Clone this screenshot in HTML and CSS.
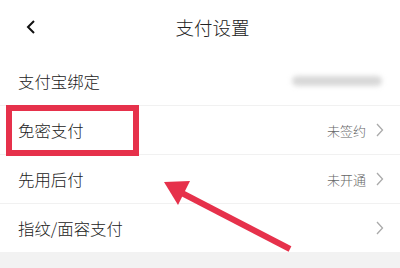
FILE: index.html
```html
<!DOCTYPE html>
<html lang="zh-CN">
<head>
  <meta charset="UTF-8">
  <title>支付设置</title>
  <meta name="viewport" content="width=device-width, initial-scale=1.0">
  <link rel="stylesheet" href="styles.css">
</head>
<body>
  <div class="page">
    <div class="header">
      <svg class="back" width="12" height="16" viewBox="0 0 12 16">
        <polyline points="9,2 3,8 9,14" fill="none" stroke="#111" stroke-width="2"/>
      </svg>
      <div class="title">支付设置</div>
      <div></div>
    </div>

    <div class="list">
      <div class="row">
        <span class="label">支付宝绑定</span>
        <span class="blurred"></span>
      </div>
      <div class="row">
        <span class="label">免密支付</span>
        <span class="right">
          <span class="value">未签约</span>
          <svg class="arrow-r" width="9" height="14" viewBox="0 0 9 14"><polyline points="2,1 7.5,7 2,13" fill="none" stroke="#aaa" stroke-width="1.3"/></svg>
        </span>
      </div>
      <div class="row">
        <span class="label">先用后付</span>
        <span class="right">
          <span class="value">未开通</span>
          <svg class="arrow-r" width="9" height="14" viewBox="0 0 9 14"><polyline points="2,1 7.5,7 2,13" fill="none" stroke="#aaa" stroke-width="1.3"/></svg>
        </span>
      </div>
      <div class="row">
        <span class="label">指纹/面容支付</span>
        <span class="right">
          <svg class="arrow-r" width="9" height="14" viewBox="0 0 9 14"><polyline points="2,1 7.5,7 2,13" fill="none" stroke="#aaa" stroke-width="1.3"/></svg>
        </span>
      </div>
    </div>

    <div class="footer"></div>

    <!-- annotation overlays -->
    <div class="mark-box"></div>
    <svg class="mark-arrow" width="400" height="268" viewBox="0 0 400 268">
      <line x1="290" y1="249" x2="178" y2="191" stroke="#e6314b" stroke-width="6"/>
      <polygon points="164,182 190,181 178,205" fill="#e6314b"/>
    </svg>
  </div>
</body>
</html>
```

FILE: styles.css
```css
body {
  margin: 0;
  background: #fff;
  font-family: "Noto Sans CJK SC", "Noto Sans", sans-serif;
}

.page {
  position: relative;
  width: 400px;
  height: 268px;
  overflow: hidden;
  display: flex;
  flex-direction: column;
}

.header {
  height: 57px;
  display: grid;
  grid-template-columns: 1fr auto 1fr;
  align-items: center;
  padding: 0 0 4px 25px;
  box-sizing: border-box;
}

.back {
  display: block;
}

.title {
  font-size: 18.5px;
  font-weight: 300;
  color: #222;
}

.row {
  height: 48px;
  display: flex;
  align-items: center;
  justify-content: space-between;
  padding: 0 16px 0 18px;
  border-bottom: 1px solid #f1f1f1;
}

.row:last-child {
  border-bottom: none;
}

.label {
  font-size: 16.4px;
  font-weight: 300;
  color: #222;
}

.right {
  display: flex;
  align-items: center;
  gap: 9px;
}

.value {
  font-size: 13px;
  font-weight: 300;
  color: #666;
}

.arrow-r {
  display: block;
}

.blurred {
  width: 90px;
  height: 10px;
  border-radius: 5px;
  background: #d8d8d8;
  filter: blur(2.5px);
  margin-right: 2px;
}

.footer {
  flex: 1;
  background: #f2f2f2;
}

.mark-box {
  position: absolute;
  left: 6px;
  top: 105px;
  width: 121px;
  height: 39px;
  border: 6.5px solid #e6314b;
}

.mark-arrow {
  position: absolute;
  left: 0;
  top: 0;
}
```
